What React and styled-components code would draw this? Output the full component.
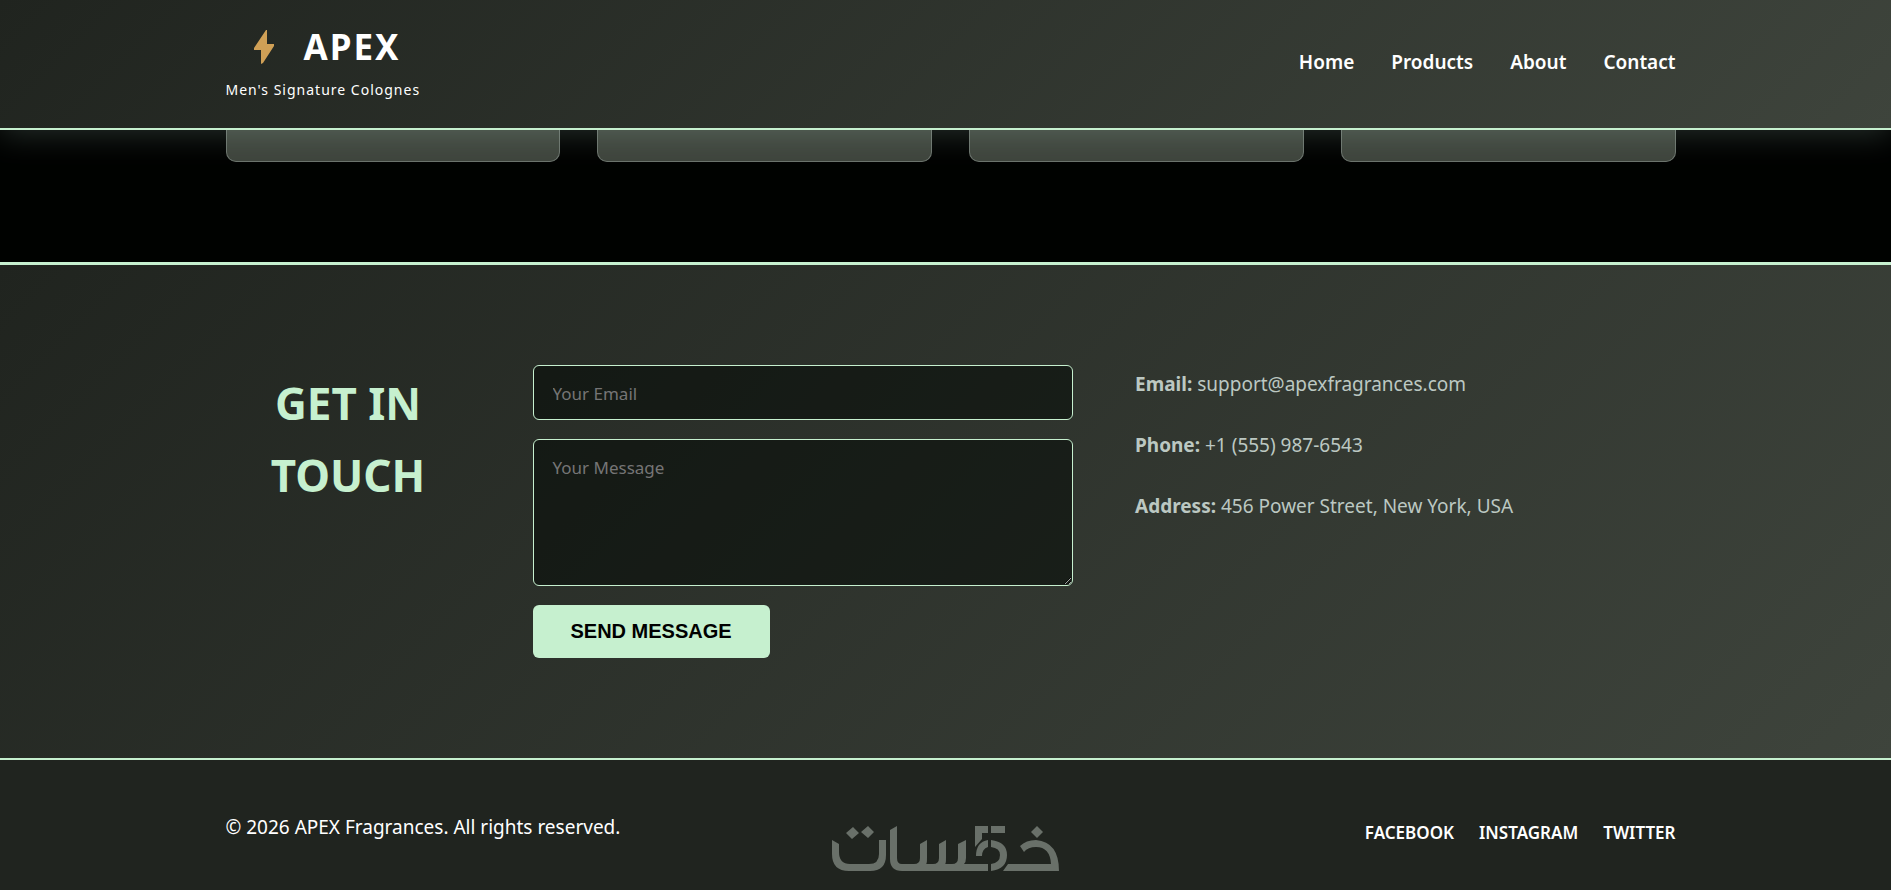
import React from 'react'
import styled, { createGlobalStyle } from 'styled-components'

const navLinks = ['Home', 'Products', 'About', 'Contact']
const socialLinks = ['Facebook', 'Instagram', 'Twitter']
const cards = [1, 2, 3, 4]

const App = () => {
  return (
    <Page>
      <GlobalStyle />
      <Header>
        <HeaderInner>
          <Brand>
            <Logo>
              <Bolt viewBox="0 0 20 34" aria-hidden="true">
                <path d="M12 0 H13 V14 H20 V16 L9 33 L7 34 V20 H0 V18 Z" />
              </Bolt>
              APEX
            </Logo>
            <Tagline>Men's Signature Colognes</Tagline>
          </Brand>
          <Nav>
            {navLinks.map((link) => (
              <NavLink key={link} href={`#${link.toLowerCase()}`}>{link}</NavLink>
            ))}
          </Nav>
        </HeaderInner>
      </Header>

      <Products>
        <CardGrid>
          {cards.map((card) => <Card key={card} />)}
        </CardGrid>
      </Products>

      <Contact id="contact">
        <ContactInner>
          <Title>Get in Touch</Title>
          <Form onSubmit={(e) => e.preventDefault()}>
            <EmailInput type="email" placeholder="Your Email" aria-label="Your Email" />
            <MessageInput placeholder="Your Message" aria-label="Your Message" />
            <SendButton type="submit">Send Message</SendButton>
          </Form>
          <Info>
            <InfoLine><b>Email:</b> support@apexfragrances.com</InfoLine>
            <InfoLine><b>Phone:</b> +1 (555) 987-6543</InfoLine>
            <InfoLine><b>Address:</b> 456 Power Street, New York, USA</InfoLine>
          </Info>
        </ContactInner>
      </Contact>

      <Footer>
        <FooterInner>
          <Copyright>© 2026 APEX Fragrances. All rights reserved.</Copyright>
          <Social>
            {socialLinks.map((link) => (
              <SocialLink key={link} href={`#${link.toLowerCase()}`}>{link}</SocialLink>
            ))}
          </Social>
        </FooterInner>
        <Watermark />
      </Footer>
    </Page>
  )
}

export default App

const Watermark = () => (
  <Mark viewBox="0 0 228 46" role="img" aria-label="خمسات">
    <path d="M21 1 L27 7 L20 13 L14 7 Z M36 0 L42 6 L36 12 L29 6 Z" />
    <path d="M0 14 L7 18 V26 Q7 38 18 38 H37 Q47 38 47 28 V14 H54 V29 Q54 45 38 45 H17 Q0 45 0 28 Z" />
    <path d="M58 4 L65 0 V32 Q65 38 70 38 H82 Q88 38 88 32 V18 L95 14 V32 Q95 38 94 38 H101 Q107 38 107 32 V18 L114 14 V32 Q114 38 113 38 H120 Q126 38 126 32 V18 L134 14 V32 Q134 36 132 38 H156 V45 H70 Q58 45 58 33 Z" />
    <path d="M143 0 H156 V7 H150 V13 L143 21 Z M159 0 H173 V7 H159 Z" />
    <path d="M144 30 Q144 16 156 14 V21 Q150 23 150 30 Z M159 14 Q175 16 175 29 Q175 43 159 45 V38 Q168 37 168 29 Q168 22 159 21 Z" />
    <path d="M205 0 L211 6 L205 12 L199 6 Z" />
    <path d="M188 20 Q194 14 204 14 Q227 16 227 45 H171 L176 38 H219 Q218 21 204 21 Q196 21 192 26 Z" />
  </Mark>
)

const GlobalStyle = createGlobalStyle`
  * {
    box-sizing: border-box;
    margin: 0;
    padding: 0;
  }

  body {
    background: #000200;
    color: #fff;
    font-family: "Noto Sans", "Open Sans", sans-serif;
    line-height: 30px;
  }

  a {
    color: inherit;
    text-decoration: none;
  }
`

const Page = styled.div`
  min-height: 100vh;
  overflow: hidden;
`

const Inner = styled.div`
  max-width: 1450px;
  margin: 0 auto;
`

const Header = styled.header`
  position: relative;
  z-index: 1;
  padding: 19px 0 23px 10px;
  background: linear-gradient(135deg, #20241f, #3e443c);
  border-bottom: 2px solid #c6f0cf;
  box-shadow: 0 4px 30px rgba(190, 230, 215, 0.2);
`

const HeaderInner = styled(Inner)`
  display: flex;
  align-items: center;
  justify-content: space-between;
`

const Brand = styled.div`
  display: flex;
  flex-direction: column;
`

const Logo = styled.div`
  display: flex;
  align-items: center;
  gap: 30px;
  padding-left: 28px;
  font-size: 35px;
  font-weight: 700;
  line-height: 56px;
  letter-spacing: 2px;
`

const Bolt = styled.svg`
  width: 20px;
  height: 34px;
  fill: #d0a056;
`

const Tagline = styled.p`
  font-size: 14px;
  letter-spacing: 1px;
`

const Nav = styled.nav`
  display: flex;
  gap: 37px;
`

const NavLink = styled.a`
  font-size: 19px;
  font-weight: 600;
`

const Products = styled.section`
  padding: 0 0 100px 10px;
  background: #000200;
`

const CardGrid = styled(Inner)`
  display: grid;
  grid-template-columns: repeat(4, 1fr);
  gap: 37px;
`

const Card = styled.article`
  height: 32px;
  background: #3e443c;
  border: 1px solid #6b736c;
  border-top: 0;
  border-radius: 0 0 10px 10px;
`

const Contact = styled.section`
  padding: 100px 0 100px 10px;
  background: linear-gradient(135deg, #20241f, #3e443c);
  border-top: 3px solid #c6f0cf;
`

const ContactInner = styled(Inner)`
  display: grid;
  grid-template-columns: 245px 1fr 1fr;
  gap: 62px;
`

const Title = styled.h2`
  padding-top: 2px;
  color: #c6f0cf;
  font-size: 44px;
  line-height: 72px;
  text-align: center;
  text-transform: uppercase;
`

const Form = styled.form`
  display: flex;
  flex-direction: column;
  align-items: flex-start;
  gap: 19px;
`

const EmailInput = styled.input`
  width: 100%;
  height: 55px;
  padding: 15px 19px 13px;
  background: rgba(0, 5, 2, 0.5);
  color: #fff;
  border: 1px solid #c6f0cf;
  border-radius: 6px;
  font: inherit;
  font-size: 17px;
  line-height: 25px;

  &::placeholder {
    color: #757575;
  }
`

const MessageInput = styled(EmailInput).attrs({ as: 'textarea' })`
  display: block;
  height: 147px;
  resize: vertical;
`

const SendButton = styled.button`
  padding: 15px 38px;
  background: #c6f0cf;
  color: #000;
  border: none;
  border-radius: 6px;
  font-family: "Liberation Sans", Arial, sans-serif;
  font-size: 20px;
  font-weight: 700;
  line-height: 23px;
  text-transform: uppercase;
  cursor: pointer;
`

const Info = styled.address`
  display: flex;
  flex-direction: column;
  gap: 31px;
  padding-top: 4px;
  color: #bcc8c2;
  font-size: 19px;
  font-style: normal;
`

const InfoLine = styled.p``

const Footer = styled.footer`
  position: relative;
  padding: 52px 0 42px 10px;
  background: #20241f;
  border-top: 2px solid #c6f0cf;
`

const FooterInner = styled(Inner)`
  display: flex;
  justify-content: space-between;
`

const Copyright = styled.p`
  font-size: 19px;
`

const Social = styled.div`
  display: flex;
  gap: 25px;
  padding-top: 6px;
`

const SocialLink = styled.a`
  font-size: 17px;
  font-weight: 600;
  text-transform: uppercase;
`

// sits over the footer, centred on the window
const Mark = styled.svg`
  position: absolute;
  left: 50%;
  bottom: 18px;
  width: 228px;
  height: 46px;
  margin-left: -114px;
  fill: #697069;
`
